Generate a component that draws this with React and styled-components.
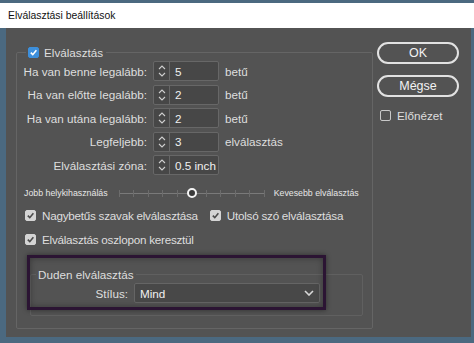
import styled, { createGlobalStyle } from 'styled-components';

const GlobalStyle = createGlobalStyle`
    html, body {
        margin: 0;
        padding: 0;
        background: #4b6980;
    }
    body {
        font-family: 'Liberation Sans', Arial, sans-serif;
    }
`;

const Check = ({ checked, blue }) => (
    <Box $blue={blue} $checked={checked}>
        {checked && (
            <svg width="9" height="9" viewBox="0 0 10 10">
                <path d="M2 5.2 L4.2 7.4 L8.2 2.6" fill="none" stroke={blue ? '#fff' : '#4a4a4a'} strokeWidth="1.8" />
            </svg>
        )}
    </Box>
);

const Spinner = ({ value }) => (
    <SpinBox>
        <SpinArrows>
            <svg width="10" height="16" viewBox="0 0 10 16">
                <path d="M2 6 L5 3 L8 6 M2 10 L5 13 L8 10" fill="none" stroke="#cfcfcf" strokeWidth="1.1" />
            </svg>
        </SpinArrows>
        <SpinValue>{value}</SpinValue>
    </SpinBox>
);

const fields = [
    { label: 'Ha van benne legalább:', value: '5', unit: 'betű' },
    { label: 'Ha van előtte legalább:', value: '2', unit: 'betű' },
    { label: 'Ha van utána legalább:', value: '2', unit: 'betű' },
    { label: 'Legfeljebb:', value: '3', unit: 'elválasztás' },
    { label: 'Elválasztási zóna:', value: '0.5 inch', unit: '' },
];

const App = () => {
    const ticks = Array.from({ length: 11 }, (_, i) => i);
    return (
        <Screen>
            <GlobalStyle />
            <TitleBar>Elválasztási beállítások</TitleBar>
            <Dialog>
                <MainGroup>
                    <GroupLegend>
                        <Check checked blue />
                        Elválasztás
                    </GroupLegend>
                    <FieldGrid>
                        {fields.map((f) => (
                            <FieldRow key={f.label}>
                                <FieldLabel>{f.label}</FieldLabel>
                                <Spinner value={f.value} />
                                <Unit>{f.unit}</Unit>
                            </FieldRow>
                        ))}
                    </FieldGrid>
                    <SliderRow>
                        <SmallText>Jobb helykihasználás</SmallText>
                        <Track>
                            {ticks.map((t) => (
                                <Tick key={t} />
                            ))}
                            <Thumb />
                        </Track>
                        <SmallText>Kevesebb elválasztás</SmallText>
                    </SliderRow>
                    <CheckRow>
                        <CheckLabel>
                            <Check checked />
                            Nagybetűs szavak elválasztása
                        </CheckLabel>
                        <CheckLabel>
                            <Check checked />
                            Utolsó szó elválasztása
                        </CheckLabel>
                    </CheckRow>
                    <CheckRow>
                        <CheckLabel>
                            <Check checked />
                            Elválasztás oszlopon keresztül
                        </CheckLabel>
                    </CheckRow>
                    <DudenArea>
                        <SubGroup>
                            <SubLegend>Duden elválasztás</SubLegend>
                            <SelectRow>
                                <FieldLabel>Stílus:</FieldLabel>
                                <Select>
                                    Mind
                                    <svg width="10" height="6" viewBox="0 0 10 6">
                                        <path d="M1 1 L5 5 L9 1" fill="none" stroke="#d8d8d8" strokeWidth="1.6" />
                                    </svg>
                                </Select>
                            </SelectRow>
                        </SubGroup>
                        <Highlight />
                    </DudenArea>
                </MainGroup>
                <SideColumn>
                    <PillButton>OK</PillButton>
                    <PillButton>Mégse</PillButton>
                    <PreviewLabel>
                        <Check />
                        Előnézet
                    </PreviewLabel>
                </SideColumn>
            </Dialog>
        </Screen>
    );
};

const Screen = styled.div`
    width: 474px;
    height: 343px;
    padding-top: 3px;
    box-sizing: border-box;
    overflow: hidden;
`;

const TitleBar = styled.div`
    height: 25px;
    background: #ffffff;
    color: #111;
    font-size: 10.4px;
    padding-left: 8px;
    display: flex;
    align-items: center;
`;

const Dialog = styled.div`
    margin: 0 3px 0 6px;
    height: 309px;
    background: #535353;
    display: flex;
    align-items: flex-start;
    padding: 16px 0 0 10px;
    box-sizing: border-box;
    color: #dedede;
    font-size: 11.7px;
`;

const MainGroup = styled.fieldset`
    margin: 0;
    padding: 1px 0 12px;
    width: 357px;
    box-sizing: border-box;
    border: 1px solid #656565;
    border-radius: 2px;
    display: flex;
    flex-direction: column;
`;

const GroupLegend = styled.legend`
    margin-left: 9px;
    padding: 0 3px 0 2px;
    height: 16px;
    display: flex;
    align-items: center;
    gap: 5px;
`;

const Box = styled.span`
    width: 11px;
    height: 11px;
    box-sizing: border-box;
    border-radius: 2px;
    display: inline-flex;
    align-items: center;
    justify-content: center;
    flex-shrink: 0;
    background: ${(p) => (p.$blue ? '#3d8fdb' : p.$checked ? '#d4d4d4' : 'transparent')};
    border: 1px solid ${(p) => (p.$blue ? '#3d8fdb' : p.$checked ? '#d4d4d4' : '#c8c8c8')};
`;

const FieldGrid = styled.div`
    display: flex;
    flex-direction: column;
    gap: 3.5px;
`;

const FieldRow = styled.div`
    display: grid;
    grid-template-columns: 130px 66px auto;
    column-gap: 6px;
    align-items: center;
    height: 20px;
`;

const FieldLabel = styled.span`
    text-align: right;
    white-space: nowrap;
`;

const SpinBox = styled.div`
    height: 20px;
    box-sizing: border-box;
    border: 1px solid #676767;
    border-radius: 2px;
    background: #474747;
    display: flex;
    align-items: stretch;
`;

const SpinArrows = styled.div`
    width: 15px;
    flex-shrink: 0;
    border-right: 1px solid #676767;
    display: flex;
    align-items: center;
    justify-content: center;
`;

const SpinValue = styled.span`
    padding-left: 5px;
    display: flex;
    align-items: center;
    white-space: nowrap;
    color: #f0f0f0;
`;

const Unit = styled.span`
    white-space: nowrap;
`;

const SliderRow = styled.div`
    margin-top: 12px;
    height: 12px;
    display: flex;
    align-items: center;
    padding-left: 7px;
`;

const SmallText = styled.span`
    font-size: 8.8px;
    white-space: nowrap;
    color: #e6e6e6;
`;

const Track = styled.div`
    position: relative;
    width: 146px;
    height: 12px;
    margin: 0 9px 0 11px;
    display: flex;
    justify-content: space-between;
    align-items: center;
    background: linear-gradient(#7a7a7a, #7a7a7a) center / 100% 1px no-repeat;
`;

const Tick = styled.span`
    width: 1px;
    height: 7px;
    background: #6c6c6c;
`;

const Thumb = styled.span`
    position: absolute;
    left: 68px;
    top: 1px;
    width: 10px;
    height: 10px;
    box-sizing: border-box;
    border-radius: 50%;
    border: 2.5px solid #f4f4f4;
    background: #3a3a3a;
`;

const CheckRow = styled.div`
    margin-top: 8px;
    height: 16px;
    display: flex;
    align-items: center;
    gap: 12px;
    padding-left: 8px;
`;

const CheckLabel = styled.label`
    display: flex;
    align-items: center;
    gap: 6px;
    white-space: nowrap;
    letter-spacing: -0.25px;
`;

const DudenArea = styled.div`
    position: relative;
    margin-top: 8px;
    padding: 13px 9px 0 13px;
`;

const SubGroup = styled.fieldset`
    margin: 0;
    padding: 2px 0 12px;
    border: 1px solid #606060;
    border-radius: 2px;
`;

const SubLegend = styled.legend`
    margin-left: 5px;
    padding: 0 2px;
`;

const SelectRow = styled.div`
    display: grid;
    grid-template-columns: 97px 186px;
    column-gap: 6px;
    align-items: center;
`;

const Select = styled.div`
    height: 20px;
    box-sizing: border-box;
    border: 1px solid #656565;
    border-radius: 2px;
    background: #484848;
    display: flex;
    align-items: center;
    justify-content: space-between;
    padding: 0 5px;
    color: #f0f0f0;
`;

const Highlight = styled.div`
    position: absolute;
    left: 10px;
    top: 0;
    width: 299px;
    height: 55px;
    box-sizing: border-box;
    border: 3px solid #2b1433;
    box-shadow: 0 0 5px rgba(0, 0, 0, 0.45), inset 0 0 6px rgba(0, 0, 0, 0.35);
    pointer-events: none;
`;

const SideColumn = styled.div`
    margin-left: 4px;
    width: 82px;
    display: flex;
    flex-direction: column;
    gap: 11px;
    margin-top: -2px;
`;

const PillButton = styled.button`
    height: 22px;
    border: 2px solid #e2e2e2;
    border-radius: 11px;
    background: transparent;
    color: #f2f2f2;
    font-family: inherit;
    font-size: 12.5px;
    font-weight: normal;
    padding: 0;
`;

const PreviewLabel = styled.label`
    display: flex;
    align-items: center;
    gap: 6px;
    padding-left: 3px;
    margin-top: 1px;
`;

export default App;
